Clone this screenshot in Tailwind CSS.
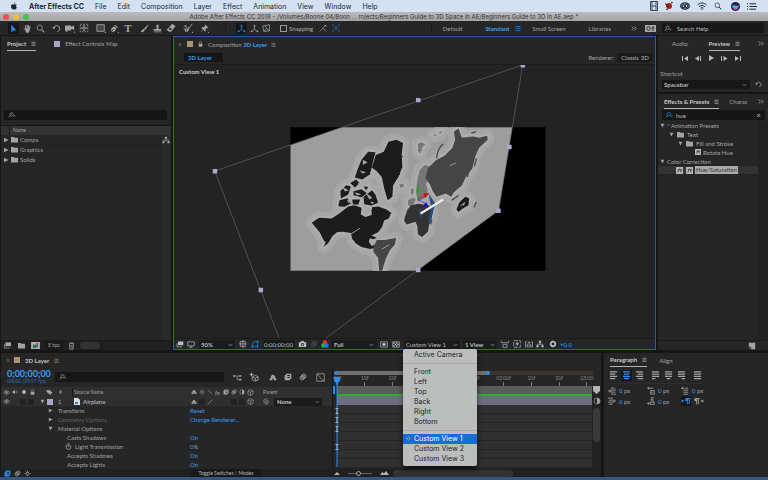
<!DOCTYPE html>
<html lang="en">
<head>
  <meta charset="UTF-8">
  <meta name="viewport" content="width=device-width, initial-scale=1.0">
  <title>Adobe After Effects CC 2018</title>
  <script src="https://cdn.jsdelivr.net/npm/@tailwindcss/browser@4"></script>
</head>
<body class="h-screen flex flex-col overflow-hidden bg-[#161616] text-[#a3a3a3] font-[Lato,sans-serif] text-[6px] leading-[9px]">

  <!-- Icon set -->
  <svg class="hidden">
    <symbol id="apple" viewBox="0 0 12 12"><path fill="currentColor" d="M8 .5C7 .6 6 1.600 6.100 2.800 7.200 2.800 8.100 1.700 8 .5zM10.300 8.400c-.6 1.500-1.400 2.800-2.400 2.800-.7 0-1-.4-1.800-.4s-1.200.4-1.800.4C2.900 11.200 1.500 8.700 1.500 6.500c0-2 1.300-3.200 2.600-3.200.8 0 1.500.5 2 .5s1.300-.6 2.300-.5c.7 0 1.400.4 1.800 1-1.600 1-1.300 3.300.1 4.100z"/></symbol>
    <symbol id="menu" viewBox="0 0 6 6"><path stroke="currentColor" d="M.5 1.500h5M.5 3.500h5M.5 5.500h5" stroke-width=".7"/></symbol>
    <symbol id="more" viewBox="0 0 8 6"><path stroke="currentColor" fill="none" stroke-width="1.200" d="M1 .5 3.500 3 1 5.500M4.500.5 7 3 4.500 5.500"/></symbol>
    <symbol id="down" viewBox="0 0 6 4"><path stroke="currentColor" fill="none" d="M1 1l2 2 2-2" stroke-width=".8"/></symbol>
    <symbol id="tri-r" viewBox="0 0 6 6"><path fill="currentColor" d="M1 .8 5.500 3 1 5.200z"/></symbol>
    <symbol id="tri-d" viewBox="0 0 6 6"><path fill="currentColor" d="M.8 1h4.400L3 5.500z"/></symbol>
    <symbol id="folder" viewBox="0 0 10 8"><path fill="currentColor" d="M1 1h3l1 1h4v5.500H1z"/></symbol>
    <symbol id="find" viewBox="0 0 12 8"><g fill="none" stroke="currentColor" stroke-width="1"><circle cx="5" cy="3" r="2.300"/><path d="M3.300 4.700 1 7.200"/></g><path fill="currentColor" d="M7.500 4.800h3L9 6.500z"/></symbol>
    <symbol id="arrow" viewBox="0 0 12 12"><path fill="currentColor" d="M3 .5v11l2.700-2.800h4.300z"/></symbol>
    <symbol id="hand" viewBox="0 0 12 12"><path fill="none" stroke="currentColor" stroke-width="1.300" stroke-linecap="round" d="M4 6.500 3.300 2.500M5.500 6V1.500M7.200 6l.3-4.200M8.600 6.500l.8-3.200M3.500 8.500 1.500 6"/><path fill="currentColor" d="M3.200 6h6L8.500 9.500 7.500 11.500H4.800L3 8.800z"/></symbol>
    <symbol id="zoom" viewBox="0 0 12 12"><g fill="none" stroke="currentColor"><circle cx="5" cy="5" r="3.500" stroke-width="1"/><path d="m7.500 7.500 3.500 3.700" stroke-width="1.400"/></g></symbol>
    <symbol id="rotate" viewBox="0 0 12 12"><path fill="none" stroke="currentColor" stroke-width="1.200" d="M2.500 5A4 4 0 1 1 7 10"/><path fill="currentColor" d="M.5 4h4.200L2.300 7.200z"/></symbol>
    <symbol id="cam" viewBox="0 0 12 12"><path fill="currentColor" d="M0 3h7.500v1.800L11 3v5.500L7.500 7v2H3v1.500H1V9H0zM10 10.500h2v1.500z"/></symbol>
    <symbol id="panb" viewBox="0 0 12 12"><g fill="none" stroke="currentColor"><path stroke-width="1" stroke-dasharray="2 1.300" d="M1.500 1.500h9v9h-9z"/><path d="M6 3v6M3 6h6"/></g><path fill="currentColor" d="m6 2 1.300 2H4.700zM6 10 4.700 8h2.600zM2 6l2-1.300v2.600zM10 6 8 4.700v2.600z"/></symbol>
    <symbol id="rect" viewBox="0 0 12 12"><path fill="#4a4a4a" stroke="currentColor" d="M1 2h9v8H1z"/><path fill="currentColor" d="M12 10v2h-2z"/></symbol>
    <symbol id="pen" viewBox="0 0 12 12"><path fill="currentColor" d="M7 1l3.500 3.500-1 1L6 2zM5.500 3 8.500 6 6.500 9.500 1.500 11l3.200-3.500.8.300.2-1-1-.3L1 10l1-4.500zM12 10v2h-2z"/></symbol>
    <symbol id="brush" viewBox="0 0 12 12"><path fill="currentColor" d="M11 .5 11.500 1 7 8 5 6.300zM4.500 6.800 6.300 8.500C5.500 10.500 3 11 .8 10.800 2.500 10 2.500 7.300 4.500 6.800z"/></symbol>
    <symbol id="stamp" viewBox="0 0 12 12"><path fill="currentColor" d="M4.500 1h3v2L7 6.500h4V9H1V6.500h4L4.500 3zM1 10h10v1H1z"/></symbol>
    <symbol id="eraser" viewBox="0 0 12 12"><path fill="currentColor" d="M7.500 1 11.500 4 6 10.500H3.500L.8 8.200zM4.500 5.300 3 7l2.500 2L7 7.300z" fill-rule="evenodd"/></symbol>
    <symbol id="roto" viewBox="0 0 12 12"><path fill="none" stroke="currentColor" stroke-width="1.100" d="M1 3.500h3l-1 7M11 1 6 8M1 6.500 4 10l3-5"/><path fill="currentColor" d="M5 6.500 7.500 8 4.500 11zM12 10v2h-2z"/></symbol>
    <symbol id="pin" viewBox="0 0 12 12"><path fill="currentColor" d="M7 .8 11.200 5l-1 .5-1-.3L7.500 7l.3 2-1 1L4.700 7.800 1 11l3-3.900L1.900 5l1-1 2 .3L6.700 2.700l-.3-1zM12 10v2h-2z"/></symbol>
    <symbol id="axis" viewBox="0 0 12 12"><path fill="none" stroke="currentColor" d="M6 7V2M6 7l4 3M6 7l-4 3"/><path fill="currentColor" d="M6 .5 7.700 3H4.300zM.8 11l.5-3 2.500 2.700zM11.200 11l-.5-3-2.500 2.700z"/></symbol>
    <symbol id="axis2" viewBox="0 0 12 12"><path fill="none" stroke="currentColor" d="M1 2.500 10 1v8L2.500 10zM4 2l2 4 4 3M6 6l-3.500 4"/></symbol>
    <symbol id="snap" viewBox="0 0 12 12"><path fill="none" stroke="currentColor" d="M1 11 6 6l4 5M6 6l4-4M8 2h2.500v2.500"/></symbol>
    <symbol id="snap2" viewBox="0 0 12 12"><path fill="none" stroke="currentColor" stroke-dasharray="2 1" d="m2 2 8 8M10 2 2 10"/><path fill="none" stroke="currentColor" d="M1 3V1h2M9 1h2v2M11 9v2H9M3 11H1V9M4.500 4.500h3v3h-3z"/></symbol>
    <symbol id="lock" viewBox="0 0 8 10"><path fill="currentColor" d="M1 4.500h6V9.500H1z"/><path fill="none" stroke="currentColor" d="M2.200 4.500V2.800a1.800 1.800 0 0 1 3.600 0V4.500"/></symbol>
    <symbol id="tree" viewBox="0 0 12 12"><path fill="currentColor" d="M4.300 1h3.400v3.200H4.300zM.5 7.800h3.400V11H.5zM8.100 7.800h3.400V11H8.100z"/><path fill="none" stroke="currentColor" d="M6 4v2M2.200 8V6.200h7.600V8M6 6v2"/></symbol>
    <symbol id="cube" viewBox="0 0 12 12"><path fill="none" stroke="currentColor" d="m6 1 4.500 2.300v5.400L6 11 1.500 8.700V3.300zM1.500 3.300 6 5.500l4.500-2.200M6 5.500V11"/></symbol>
    <symbol id="draft" viewBox="0 0 12 12"><path fill="none" stroke="currentColor" d="m7.500 4 3.500 1.800v3.500L7.500 11 4 9.300V5.800zM4 5.800l3.500 1.700L11 5.800M7.500 7.500V11"/><path fill="currentColor" d="m3 0 .8 2.200L6 3l-2.200.8L3 6l-.8-2.200L0 3l2.200-.8z"/></symbol>
    <symbol id="eye" viewBox="0 0 12 8"><path fill="none" stroke="currentColor" stroke-width="1.200" d="M1 4c2-4 8-4 10 0-2 4-8 4-10 0z"/><circle cx="6" cy="3.800" r="2" fill="currentColor"/></symbol>
    <symbol id="spk" viewBox="0 0 12 10"><path fill="currentColor" d="M1 3h2l3-2.500v9L3 7H1z"/><path fill="none" stroke="currentColor" d="M7.500 3c1 1 1 3 0 4M9 1.500c2 2 2 5 0 7"/></symbol>
    <symbol id="tag" viewBox="0 0 12 10"><path fill="currentColor" d="M1 1.500h5L11 6 7.500 9.500 1 5z"/></symbol>
    <symbol id="shy" viewBox="0 0 12 10"><path fill="currentColor" d="M1 9V6h1.500C2.500 3 4 1 6 1s3.500 2 3.500 5H11v3H7V6.500H5V9z"/></symbol>
    <symbol id="film" viewBox="0 0 12 12"><path fill="currentColor" fill-rule="evenodd" d="M3 1h8v8H9v2H1V3h2zM5 3v1.500h4V3zM5 6v1.500h4V6z"/></symbol>
    <symbol id="blur" viewBox="0 0 12 12"><g fill="none" stroke="currentColor" stroke-width="1.100"><circle cx="7.500" cy="4.500" r="3"/><circle cx="6" cy="6" r="3"/><circle cx="4.500" cy="7.500" r="3"/></g></symbol>
    <symbol id="half" viewBox="0 0 12 12"><circle cx="6" cy="6" r="4.500" fill="none" stroke="currentColor"/><path fill="currentColor" d="M6 1.500a4.500 4.500 0 0 1 0 9z"/></symbol>
    <symbol id="star" viewBox="0 0 12 12"><path stroke="currentColor" fill="none" stroke-width="1.200" d="M6 1v10M1 6h10M3 3l6 6M9 3 3 9"/><circle cx="6" cy="6" r="1.500" fill="#262626"/></symbol>
    <symbol id="slash" viewBox="0 0 12 12"><path stroke="currentColor" stroke-width="1.300" d="M1.500 10.500l9-9"/></symbol>
    <symbol id="bslash" viewBox="0 0 12 12"><path stroke="currentColor" stroke-width="1.300" d="M1.500 1.500l9 9"/></symbol>
    <symbol id="whip" viewBox="0 0 12 12"><path fill="none" stroke="currentColor" stroke-width="1.100" d="M6 6c1-1 2.500.5 1.300 1.800S3.500 8 3.500 6 6 3 7.800 3.800 10.500 7 8.500 9.500 2 10 1.300 6.500 3.500 1 6.500 1"/></symbol>
    <symbol id="graph" viewBox="0 0 12 12"><path fill="none" stroke="currentColor" d="M1 1h10v10H1zM1 2c5 0 4 8 10 8"/></symbol>
    <symbol id="flow" viewBox="0 0 14 10"><path fill="currentColor" d="M0 1.500h3.500v2.500H0zM9.500 1.500H13V4H9.500zM9.500 7H13v2.500H9.500z"/><path fill="none" stroke="currentColor" d="M3 2.700h7M6.500 3v5.300H10"/></symbol>
    <symbol id="trash" viewBox="0 0 10 12"><path fill="none" stroke="currentColor" d="M1 2.500h8M3.500 2.500V1h3v1.500M2 3l.5 8h5L8 3M4 4.500v5M6 4.500v5"/></symbol>
    <symbol id="stack" viewBox="0 0 12 10"><path fill="currentColor" d="M3 .5h8V6H3z"/><path fill="none" stroke="currentColor" d="M1.500 3v5.500H9M5 2.500h4"/></symbol>
    <symbol id="monitor" viewBox="0 0 12 10"><path fill="none" stroke="currentColor" d="M1 1h10v6H1zM6 7v2M3.500 9.200h5"/></symbol>
    <symbol id="grid" viewBox="0 0 12 12"><path fill="none" stroke="currentColor" d="M2 2h7.500v7.500H2zM5.800 0v12M0 5.800h11.500"/></symbol>
    <symbol id="mask" viewBox="0 0 12 12"><path fill="none" stroke="currentColor" stroke-width="1.100" d="M2 10V7c0-2.500 2-4.500 4-4.500h4V10z"/><path fill="currentColor" d="M1 9h2v2H1zM9 1.500h2v2H9zM9 9h2v2H9z"/></symbol>
    <symbol id="photo" viewBox="0 0 12 10"><path fill="currentColor" fill-rule="evenodd" d="M1 2.500h2.500L4.500 1h3l1 1.500H11V9H1zM6 3.500a2.200 2.200 0 1 0 0 4.400 2.200 2.200 0 0 0 0-4.400z"/><circle cx="6" cy="5.700" r="1.200" fill="currentColor"/></symbol>
    <symbol id="roi" viewBox="0 0 12 10"><path fill="none" stroke="currentColor" d="M1 1h10v8H1z"/><path fill="currentColor" d="M3.500 3h5v4h-5z"/></symbol>
    <symbol id="alpha" viewBox="0 0 12 10"><path fill="none" stroke="currentColor" d="M1 1h10v8H1z"/><path fill="currentColor" d="M2 2h2v2H2zM6 2h2v2H6zM4 4h2v2H4zM8 4h2v2H8zM2 6h2v2H2zM6 6h2v2H6z"/></symbol>
    <symbol id="aspect" viewBox="0 0 12 12"><path fill="none" stroke="currentColor" d="M.5 1v3h11V1M3 6.500h6V11H3z"/></symbol>
    <symbol id="fast" viewBox="0 0 12 12"><path fill="none" stroke="currentColor" stroke-dasharray="6 2" d="M1 1h10v10H1z"/><path fill="currentColor" d="M7 2 3.500 6.500H6L5 10l4-5H6.500z"/></symbol>
    <symbol id="tlink" viewBox="0 0 12 10"><path fill="none" stroke="currentColor" d="M3 1H.8v7.500h10.400V1H9M6 7V1M4 3l2-2 2 2M3.500 4v4M8.500 4v4"/></symbol>
    <symbol id="expo" viewBox="0 0 12 12"><circle cx="6" cy="6" r="3.500" fill="none" stroke="currentColor" stroke-width="2.600"/></symbol>
    <symbol id="swatch" viewBox="0 0 10 10"><path fill="currentColor" d="M1 1h8v8H4L1 6z"/><path fill="#262626" d="M1.500 6H4v2.500z"/></symbol>
    <symbol id="preset" viewBox="0 0 8 8"><path fill="#b5b5b5" d="M0 0h8v8H0z"/><path fill="none" stroke="#333" d="M2 6 4 2l2 4M2 3h1M5 3h2"/></symbol>
    <symbol id="left" viewBox="0 0 10 10"><path stroke="currentColor" stroke-width="1.200" d="M1 1h8M1 3.500h6M1 6h8M1 8.500h6"/></symbol>
    <symbol id="center" viewBox="0 0 10 10"><path stroke="currentColor" stroke-width="1.200" d="M1 1h8M2 3.500h6M1 6h8M2 8.500h6"/></symbol>
    <symbol id="right" viewBox="0 0 10 10"><path stroke="currentColor" stroke-width="1.200" d="M1 1h8M3 3.500h6M1 6h8M3 8.500h6"/></symbol>
    <symbol id="jl" viewBox="0 0 10 10"><path stroke="currentColor" stroke-width="1.200" d="M1 1h8M1 3.500h8M1 6h8M1 8.500h4"/></symbol>
    <symbol id="jc" viewBox="0 0 10 10"><path stroke="currentColor" stroke-width="1.200" d="M1 1h8M1 3.500h8M1 6h8M3 8.500h4"/></symbol>
    <symbol id="jr" viewBox="0 0 10 10"><path stroke="currentColor" stroke-width="1.200" d="M1 1h8M1 3.500h8M1 6h8M5 8.500h4"/></symbol>
    <symbol id="ja" viewBox="0 0 10 10"><path stroke="currentColor" stroke-width="1.200" d="M1 1h8M1 3.500h8M1 6h8M1 8.500h8"/></symbol>
    <symbol id="ind-l" viewBox="0 0 10 10"><path stroke="currentColor" fill="none" d="M0 5h4M2.500 3v4M5 0v10M6 1.500h3M6 4h4M6 6.500h3M6 9h4"/></symbol>
    <symbol id="ind-r" viewBox="0 0 10 10"><path stroke="currentColor" fill="none" d="M10 5H6M7.500 3v4M5 0v10M0 1.500h4M1 4h3M0 6.500h4M1 9h3"/></symbol>
    <symbol id="sp-b" viewBox="0 0 10 10"><path stroke="currentColor" fill="none" d="M0 1.500h8M2 0v3M4.500 4.500H9M4.500 4v5H9V4M5 6.500h3"/></symbol>
    <symbol id="sp-a" viewBox="0 0 10 10"><path stroke="currentColor" fill="none" d="M4.500 1H9M4.500 3H8M4.500 5H9M0 8h4M2 6.500v3M4.500 6.500H9v3H4.500z"/></symbol>
    <symbol id="sp-f" viewBox="0 0 10 10"><path stroke="currentColor" fill="none" d="M0 1.500h4M2 0v3M5 1.500h4M3 4h6M3 6.500h6M3 9h6"/></symbol>
  </svg>

  <!-- System menu bar -->
  <header class="h-3 shrink-0 flex items-center bg-[#d3e1f3] text-[#1d2733] font-[Inter,sans-serif] text-[7px] pl-[10px] pr-[11px]">
    <svg class="size-2 mr-[11px]"><use href="#apple"/></svg>
    <nav class="flex gap-[11px]">
      <a href="#" class="font-bold">After Effects CC</a>
      <a href="#">File</a>
      <a href="#">Edit</a>
      <a href="#">Composition</a>
      <a href="#">Layer</a>
      <a href="#">Effect</a>
      <a href="#">Animation</a>
      <a href="#">View</a>
      <a href="#">Window</a>
      <a href="#">Help</a>
    </nav>
    <div class="ml-auto flex items-center gap-[7px]">
      <svg class="w-2 h-[10px]" viewBox="0 0 8 10"><path fill="none" stroke="currentColor" d="M.5.5h7v9h-7zM2 0v10M6 0v10M2 5h4" stroke-width=".8"/></svg>
      <svg class="size-2" viewBox="0 0 8 8"><circle cx="4" cy="4" r="3" fill="#b01c18"/><path stroke="#222" d="M0 1.500 4 4.500M6 1l2-1M3 7 1 8"/></svg>
      <svg class="w-[10px] h-2" viewBox="0 0 10 8"><g fill="none" stroke="currentColor" stroke-width="1.200"><ellipse cx="5" cy="4" rx="4.300" ry="3.200"/><circle cx="3.500" cy="4.300" r="1.500"/><circle cx="6.500" cy="4" r="1.500"/></g></svg>
      <svg class="w-[10px] h-2" viewBox="0 0 10 8"><path fill="none" stroke="currentColor" d="M.5 3C3 .3 7 .3 9.500 3M2 4.700c1.700-1.700 4.300-1.700 6 0M3.500 6.200c1-.8 2-.8 3 0"/><circle cx="5" cy="7.200" r=".7" fill="currentColor"/></svg>
      <svg class="size-2"><use href="#zoom"/></svg>
      <svg class="size-[9px] ml-[2px]" viewBox="0 0 9 9"><circle cx="4.500" cy="4.500" r="4.500" fill="#232046"/><path d="M1 4.500c2-3 5 1 7-1.500-.5 4-5 5-7 1.500z" fill="#35b8e8"/><path d="M2 6c2 1 4-1 5.500-1C7 8 3 9 2 6z" fill="#d355c0"/></svg>
      <svg class="w-[10px] h-[7px]" viewBox="0 0 10 7"><path stroke="currentColor" d="M0 .8h1M2.500.8H9M0 3.500h1M2.500 3.500H10M0 6.200h1M2.500 6.200H9"/></svg>
    </div>
  </header>

  <!-- Title bar -->
  <div class="h-[9px] shrink-0 flex items-center bg-linear-to-b from-[#bcbabc] to-[#a5a3a5] text-[#333] px-[3px]">
    <div class="flex gap-1">
      <span class="size-[6px] rounded-full bg-[#f4504b]"></span>
      <span class="size-[6px] rounded-full bg-[#f6bd3d]"></span>
      <span class="size-[6px] rounded-full bg-[#3bc84c]"></span>
    </div>
    <h1 class="grow text-center pr-[26px] font-[Inter,sans-serif] text-[6px] leading-[9px] whitespace-nowrap">Adobe After Effects CC 2018 - /Volumes/Boone 04/Boon ... rojects/Beginners Guide to 3D Space in AE/Beginners Guide to 3D in AE.aep *</h1>
  </div>

  <!-- Tools -->
  <div class="h-[14px] shrink-0 flex items-center bg-[#262626] pl-2 pr-1">
    <div class="flex items-center gap-1">
      <button aria-label="Selection" class="bg-[#161616] text-[#2d8ceb] p-px"><svg class="size-[9px]"><use href="#arrow"/></svg></button>
      <button aria-label="Hand"><svg class="size-[9px]"><use href="#hand"/></svg></button>
      <button aria-label="Zoom"><svg class="size-[9px]"><use href="#zoom"/></svg></button>
    </div>
    <div class="flex items-center gap-1 ml-[7px]">
      <button aria-label="Rotate"><svg class="size-[9px]"><use href="#rotate"/></svg></button>
      <button aria-label="Camera"><svg class="size-[10px]"><use href="#cam"/></svg></button>
      <button aria-label="Pan behind"><svg class="size-[10px]"><use href="#panb"/></svg></button>
    </div>
    <div class="flex items-center gap-1 ml-[7px]">
      <button aria-label="Rectangle"><svg class="size-[10px]"><use href="#rect"/></svg></button>
      <button aria-label="Pen"><svg class="size-[9px]"><use href="#pen"/></svg></button>
      <button aria-label="Type" class="w-[10px] font-['Liberation_Serif',serif] text-[11px] leading-[10px] font-bold">T</button>
    </div>
    <div class="flex items-center gap-1 ml-[7px]">
      <button aria-label="Brush"><svg class="size-[9px]"><use href="#brush"/></svg></button>
      <button aria-label="Clone stamp"><svg class="size-[9px]"><use href="#stamp"/></svg></button>
      <button aria-label="Eraser"><svg class="size-[10px]"><use href="#eraser"/></svg></button>
    </div>
    <div class="flex items-center gap-[7px] ml-[7px]">
      <button aria-label="Roto brush"><svg class="size-[10px]"><use href="#roto"/></svg></button>
      <button aria-label="Puppet pin"><svg class="size-[9px]"><use href="#pin"/></svg></button>
    </div>
    <div class="flex items-center gap-[3px] ml-4 pl-[10px] border-l border-[#1b1b1b]">
      <button aria-label="Local axis" class="bg-[#161616] text-[#2d8ceb] p-px"><svg class="size-[9px]"><use href="#axis"/></svg></button>
      <button aria-label="World axis"><svg class="size-[9px]"><use href="#axis"/></svg></button>
      <button aria-label="View axis"><svg class="size-[9px]"><use href="#axis2"/></svg></button>
    </div>
    <label class="flex items-center gap-[2px] ml-[9px] text-[#b0b0b0]">
      <input type="checkbox" class="appearance-none size-[7px] border border-[#9a9a9a]">Snapping
    </label>
    <button aria-label="Snap edges" class="ml-[6px]"><svg class="size-2"><use href="#snap"/></svg></button>
    <button aria-label="Snap features" class="ml-[5px] text-[#2671ad]"><svg class="size-2"><use href="#snap2"/></svg></button>

    <nav class="ml-auto flex items-center border-l border-[#1b1b1b] pl-[11px]">
      <a href="#">Default</a>
      <a href="#" class="ml-[23px] text-[#3ba0f2] font-bold">Standard</a>
      <svg class="size-[6px] ml-[6px] text-[#2d8ceb]"><use href="#menu"/></svg>
      <a href="#" class="ml-[11px]">Small Screen</a>
      <a href="#" class="ml-[23px]">Libraries</a>
      <svg class="w-[6px] h-[5px] ml-5"><use href="#more"/></svg>
    </nav>
    <svg class="w-[11px] h-[7px] ml-2" viewBox="0 0 11 7"><path fill="#a8a8a8" d="M0 0h11v7H0z"/><circle cx="3.500" cy="3.500" r="1.800" fill="none" stroke="#333"/><path stroke="#333" d="M8 1v5M6.500 3h3"/></svg>
    <label class="flex items-center gap-1 bg-[#171717] ml-[6px] h-[10px] w-[102px] pl-[2px]">
      <svg class="w-[10px] h-[7px]"><use href="#find"/></svg>
      <input type="text" aria-label="Search Help" placeholder="Search Help" class="w-full min-w-0 bg-transparent placeholder:text-[#bcbcbc]">
    </label>
  </div>

  <!-- Top row of panels -->
  <main class="flex-1 min-h-0 flex gap-[2px] pt-px pb-[3px]">

    <!-- Project -->
    <section class="w-[171px] shrink-0 flex flex-col bg-[#262626] border-l border-[#161616]">
      <div class="flex items-center h-[15px] pl-[6px]">
        <div class="flex items-center gap-[5px] h-[14px] border-b border-[#b5b5b5] text-[#c8c8c8] font-bold">Project <svg class="size-[5px]"><use href="#menu"/></svg></div>
        <span class="size-[6px] bg-[#a9a6cf] ml-[18px] mr-[5px]"></span>Effect Controls Map
      </div>
      <div class="h-[59px]"></div>
      <label class="flex items-center h-[10px] bg-[#161616] ml-[3px] mr-1 pl-1">
        <svg class="w-[9px] h-[6px]"><use href="#find"/></svg>
        <input type="text" aria-label="Search project" class="w-full min-w-0 bg-transparent">
      </label>
      <div class="h-[10px] mt-[5px] border-t border-[#161616] bg-[#333] text-[5px] flex items-center pl-2"><span class="border-l border-[#1b1b1b] pl-[3px]">Name</span></div>
      <div class="flex flex-1">
        <ul class="flex-1 *:h-[10px] *:flex *:items-center *:gap-px *:pl-[2px] *:border-b *:border-[#222]">
          <li><svg class="size-[6px]"><use href="#tri-r"/></svg><svg class="w-[9px] h-[7px]"><use href="#folder"/></svg>Comps</li>
          <li><svg class="size-[6px]"><use href="#tri-r"/></svg><svg class="w-[9px] h-[7px]"><use href="#folder"/></svg>Graphics</li>
          <li><svg class="size-[6px]"><use href="#tri-r"/></svg><svg class="w-[9px] h-[7px]"><use href="#folder"/></svg>Solids</li>
        </ul>
        <div class="w-[9px] bg-[#2a2a2a] pt-px"><svg class="size-2"><use href="#tree"/></svg></div>
      </div>
      <div class="h-[10px] flex items-center gap-[5px] pl-[2px] border-t border-[#1b1b1b] bg-[#202020]">
        <svg class="w-[9px] h-[7px]"><use href="#stack"/></svg>
        <svg class="w-[9px] h-[7px]"><use href="#folder"/></svg>
        <svg class="w-[9px] h-[7px]" viewBox="0 0 10 8"><path fill="#b5b5b5" d="M0 0h10v8H0z"/><path fill="#2a7a48" d="M2 3h4v4H2z"/><path fill="#d1362c" d="M6 1h2v3H6z"/><path fill="#2b63c4" d="M5 4h3v2H5z"/></svg>
        <button class="bg-[#1a1a1a] px-[3px] text-[5px]">8 bpc</button>
        <svg class="w-[7px] h-2"><use href="#trash"/></svg>
        <span class="w-5 h-[7px] rounded-full bg-[#323232]"></span>
      </div>
    </section>

    <!-- Composition -->
    <section class="flex-1 min-w-0 flex flex-col bg-[#262626] border border-[#29609b] relative">
      <div class="flex items-center h-[14px] pl-1">
        <span class="text-[7px] text-[#777]">×</span>
        <span class="size-[6px] bg-[#a8946f] ml-[5px]"></span>
        <svg class="w-[5px] h-[6px] mx-[5px]"><use href="#lock"/></svg>
        Composition&nbsp;<b class="text-[#3a9df0]">3D Layer</b>
        <svg class="size-[5px] ml-1"><use href="#menu"/></svg>
      </div>
      <div class="flex items-center h-[14px] pl-[10px] border-b border-[#1d1d1d]">
        <button class="bg-[#161616] text-[#3a9df0] font-bold w-[39px] text-left pl-1">3D Layer</button>
        <span class="ml-auto mr-[3px]">Renderer:</span>
        <button class="bg-[#1b1b1b] w-9 mr-[2px] text-[#b5b5b5]">Classic 3D</button>
      </div>

      <div class="flex-1 min-h-0 bg-[#232323] relative">
        <svg class="w-full h-full" viewBox="174 65 481 274">
          <defs>
            <clipPath id="comp"><path d="M290 127.500h256v144H290z"/></clipPath>
            <filter id="coast" x="-5%" y="-5%" width="110%" height="110%"><feTurbulence type="fractalNoise" baseFrequency=".3" numOctaves="2" seed="4" result="n"/><feDisplacementMap in="SourceGraphic" in2="n" scale="5" xChannelSelector="R" yChannelSelector="G"/></filter>
            <path id="america" d="M124 340l22-15 38 2 22-14 28-22 18-4 22 8-2 20 14 8 18-6 2-24 18-2 24 8 16 12-8 16-14 6-6 20-12 16-22 10-6 18 8 12 20-4 2 8-26 6-26-6-16-10-12-14-4-18-24-4-18 2-14 12-12 20-14 12 6-14-6-6-12-24z"/>
            <path id="arctic" d="M305 174l12-38 24-10 14-30 24-6 20 10-4 32 2 40-12 30-16 26-2 34-14 10-10-32-8-38-16-18zM262 180l12-30 20-24 22 2-8 30-8 36-24 16-22-6zM210 245l18-18 14 4-8 24-22 12zM240 220l18-10 10 10-14 14zM250 245l24-6 16 12-16 12-24-6zM208 272l24-6 10 16-20 10-18-2zM280 230l14 2-6 10zM280 262l26-20 10 14 8 24-20 8-22-4zM246 270l24 0-6 16-16-2zM290 382l14-4 16 8-12 4z"/>
            <path id="samerica" d="M310 412l10-20 24 0 34-6-4 20-14 16-12 24-8 24-6 24h-6l-4-48-14-18z"/>
            <path id="africa" d="M404 325l8-24 12-14 22-4 32 6 10 20-4 22-6 12-4 24-18 16-12-8-2-26-6-12-26 8-8-12z"/>
            <path id="aus" d="M560 300l8-20 18-18 12 4-2 22-16 8-14 12z"/>
            <path id="asia" d="M466 206l8-30 24-24 26-14 24-24 8-24-4-24 14-10 10 28 34-4 18 4 24-6 2 12-26 24-12 28-8 34-20 26-12 26-24 20-8 14-16-10-28 10-12-18-8-20z"/>
            <path id="europe" d="M438 250l4-40 8-30 14-14 16 4-4 34-8 20 6 20-10 22-20 10zM424 236l8 4-4 16-6-4zM414 272l14-8 10 6-14 24-10-8zM388 224l12-2 2 8-10 6zM444 102l10-4 10 4-8 14-6 16-6-8zM490 76l10-4-4 8zM506 68l12-6-6 10z"/>
            <g id="lands"><use href="#america"/><use href="#arctic"/><use href="#samerica"/><use href="#africa"/><use href="#aus"/><use href="#asia"/><use href="#europe"/></g>
          </defs>
          <path fill="#000" d="M290 127.500h256v144H290z"/>
          <g clip-path="url(#comp)">
            <path fill="#9d9d9d" d="M214 171.500 523 65 499 211 289 366z"/>
            <g transform="translate(270 110) scale(.3333)">
              <g stroke="#a6a6a6" fill="#a6a6a6" stroke-width="38" stroke-linejoin="round"><use href="#lands"/></g>
              <g stroke="#adadad" fill="#adadad" stroke-width="14" stroke-linejoin="round"><use href="#lands"/></g>
              <g filter="url(#coast)">
                <g fill="#1e1e1e"><use href="#america"/><use href="#arctic"/><use href="#aus"/></g>
                <path fill="#a6a6a6" d="m216 232 20 10-12 4zM254 248l20 6-14 4zM286 250l20 14-8 6zM300 276l12 2-6 6zM230 270l18 8-14 2zM278 150l14 8-14 8zM268 182l20 6-12 4zM575 286l10-6-2 8z"/>
                <use href="#europe" fill="#777"/>
                <use href="#samerica" fill="#454545"/>
                <use href="#asia" fill="#444"/>
                <use href="#africa" fill="#313131"/>
                <path fill="none" stroke="#4a4a4a" stroke-width="4" d="M500 146c2-20 8-34 20-44M620 146l-6 24M598 184l-6 18M546 272l20-14M612 294l8-16M482 345l4-14M604 70l14-4"/>
              </g>
              <path stroke="#999" stroke-width="3" d="m242 374 28-18M334 420l24-14M572 290l14-12M540 168l18-8"/>
              <path fill="#224c86" d="m476 252 20 30-16 62-6-4 10-46zM446 300l10 4-4 26z"/>
              <path stroke="#ececec" stroke-width="7" d="M452 312 520 270"/>
              <path stroke="#18a020" stroke-width="2" d="M444 268v-34"/><path fill="#18a81e" d="m444 226 5 18h-10z"/>
              <path stroke="#b01818" stroke-width="2" d="m444 268 26-12"/><path fill="#c01414" d="m478 250-18 2 6 14z"/>
              <path stroke="#1a1ad0" stroke-width="2" d="m444 270 26 14"/><path fill="#1515d0" d="m478 292-18-4 8-10z"/>
            </g>
          </g>
          <path fill="none" stroke="#6d6b80" stroke-width=".6" d="M214 171.500 523 65 499 211 289 366z"/>
          <path fill="#aaa8d0" d="M212 169.500h4.500v4.500H212zM416 98h4.500v4.500H416zM521 63h4.500v4.500H521zM507.500 145h4.500v4.500h-4.500zM496.500 209h4.500v4.500h-4.500zM416 268.500h4.500v4.500H416zM258 288.500h4.500v4.500H258z"/>
        </svg>
        <b class="absolute top-[2px] left-[5px] text-[#ccc]">Custom View 1</b>
      </div>

      <div class="h-[11px] flex items-center border-t border-[#1b1b1b] pl-[2px] text-[#bdbdbd]">
        <svg class="w-2 h-[7px]"><use href="#stack"/></svg>
        <svg class="w-2 h-[7px] ml-[3px]"><use href="#monitor"/></svg>
        <div class="relative w-9 ml-1 bg-[#1b1b1b]">
          <select aria-label="Magnification" class="appearance-none w-full font-bold pl-[2px]"><option>50%</option></select>
          <svg class="absolute right-[2px] top-[3px] w-[5px] h-1"><use href="#down"/></svg>
        </div>
        <svg class="size-2 ml-1"><use href="#grid"/></svg>
        <svg class="size-2 ml-1 text-[#2d8ceb]"><use href="#mask"/></svg>
        <button class="bg-[#1b1b1b] w-[31px] ml-1">0;00;00;00</button>
        <svg class="w-[9px] h-2 ml-1"><use href="#photo"/></svg>
        <svg class="size-2 ml-[3px] text-[#484848]"><use href="#blur"/></svg>
        <svg class="size-2 ml-[3px]" viewBox="0 0 8 8"><circle cx="4" cy="2.500" r="2.200" fill="#e33"/><circle cx="2.500" cy="5.500" r="2.200" fill="#2b2"/><circle cx="5.500" cy="5.500" r="2.200" fill="#36f"/></svg>
        <div class="relative w-[46px] ml-[2px] bg-[#1b1b1b]">
          <select aria-label="Resolution" class="appearance-none w-full font-bold pl-[3px]"><option>Full</option></select>
          <svg class="absolute right-[3px] top-[3px] w-[5px] h-1"><use href="#down"/></svg>
        </div>
        <svg class="w-2 h-[7px] ml-[3px]"><use href="#roi"/></svg>
        <svg class="w-2 h-[7px] ml-1"><use href="#alpha"/></svg>
        <div class="relative w-14 ml-1">
          <div class="relative bg-[#1b1b1b]">
            <select aria-label="3D view" class="appearance-none w-full pl-[2px]"><option>Custom View 1</option></select>
            <svg class="absolute right-[2px] top-[3px] w-[5px] h-1"><use href="#down"/></svg>
          </div>
          <!-- 3D view popup -->
          <div role="menu" class="absolute z-10 top-[9px] -left-px w-[74px] py-px pb-[2px] rounded-[2px] bg-[#bcbdbd] shadow-md shadow-black/60 text-[#222] font-[Inter,sans-serif] text-[7px] *:block *:text-left whitespace-nowrap">
            <button role="menuitem" class="h-[10px] pl-[11px]">Active Camera</button>
            <hr class="my-[3px] border-[#a8a8a8]">
            <button role="menuitem" class="h-[10px] pl-[11px]">Front</button>
            <button role="menuitem" class="h-[10px] pl-[11px]">Left</button>
            <button role="menuitem" class="h-[10px] pl-[11px]">Top</button>
            <button role="menuitem" class="h-[10px] pl-[11px]">Back</button>
            <button role="menuitem" class="h-[10px] pl-[11px]">Right</button>
            <button role="menuitem" class="h-[10px] pl-[11px]">Bottom</button>
            <hr class="my-[3px] border-[#a8a8a8]">
            <button role="menuitem" class="h-[10px] w-full bg-[#146dd9] text-white"><span class="flex items-center pl-[3px] gap-[3px]"><svg class="size-[5px] text-[#a9bfe8]"><use href="#star"/></svg>Custom View 1</span></button>
            <button role="menuitem" class="h-[10px] pl-[11px]">Custom View 2</button>
            <button role="menuitem" class="h-[10px] pl-[11px]">Custom View 3</button>
          </div>
        </div>
        <div class="relative w-[34px] ml-[3px] bg-[#1b1b1b]">
          <select aria-label="View layout" class="appearance-none w-full font-bold pl-[2px]"><option>1 View</option></select>
          <svg class="absolute right-[2px] top-[3px] w-[5px] h-1"><use href="#down"/></svg>
        </div>
        <svg class="size-2 ml-1"><use href="#aspect"/></svg>
        <svg class="size-2 ml-1"><use href="#fast"/></svg>
        <svg class="w-2 h-[7px] ml-1"><use href="#tlink"/></svg>
        <svg class="size-2 ml-[3px]"><use href="#tree"/></svg>
        <svg class="size-2 ml-[5px]"><use href="#expo"/></svg>
        <a href="#" class="ml-[3px] text-[#3a9df0]">+0.0</a>
      </div>
    </section>

    <!-- Right column -->
    <aside class="w-[110px] shrink-0 flex flex-col gap-[2px]">
      <section class="bg-[#262626] h-14">
        <div class="flex items-center h-[15px] pl-[14px] pr-1">
          Audio
          <div class="flex items-center gap-[5px] h-[14px] border-b border-[#b5b5b5] text-[#c8c8c8] font-bold ml-[21px]">Preview <svg class="size-[5px]"><use href="#menu"/></svg></div>
          <svg class="w-[6px] h-[5px] ml-auto"><use href="#more"/></svg>
        </div>
        <div class="flex justify-center gap-[6px] h-[14px] items-center pr-1 text-[#b8b8b8]">
          <svg class="w-[7px] h-[5px]" viewBox="0 0 7 5"><path fill="currentColor" d="M0 0h1v5H0zM6 0v5L2 2.500z"/></svg>
          <svg class="w-[7px] h-[5px]" viewBox="0 0 7 5"><path fill="currentColor" d="M4 0v5L0 2.500zM5 0h1v5H5z"/></svg>
          <svg class="w-[7px] h-[6px]" viewBox="0 0 7 6"><path fill="currentColor" d="M1 0v6l5-3z"/></svg>
          <svg class="w-[7px] h-[5px]" viewBox="0 0 7 5"><path fill="currentColor" d="M0 0h1v5H0zM2.500 0v5l4-2.500z"/></svg>
          <svg class="w-[7px] h-[5px]" viewBox="0 0 7 5"><path fill="currentColor" d="M1 0v5l4-2.500zM6 0h1v5H6z"/></svg>
        </div>
        <label for="shortcut" class="block pl-[2px] h-[9px] mt-1">Shortcut</label>
        <div class="flex items-center gap-[5px] mt-[2px] pl-1">
          <div class="relative bg-[#171717] w-[88px]">
            <select id="shortcut" class="appearance-none w-full pl-[2px] font-bold text-[#b8b8b8]"><option>Spacebar</option></select>
            <svg class="absolute right-[3px] top-[3px] w-[5px] h-1"><use href="#down"/></svg>
          </div>
          <svg class="size-[7px]"><use href="#rotate"/></svg>
        </div>
      </section>

      <section class="bg-[#262626] flex-1 flex flex-col min-h-0">
        <div class="flex items-center h-[15px] pl-[6px] pr-1">
          <div class="flex items-center gap-[5px] h-[14px] border-b border-[#b5b5b5] text-[#c8c8c8] font-bold">Effects &amp; Presets <svg class="size-[5px]"><use href="#menu"/></svg></div>
          <span class="ml-[10px]">Charac</span>
          <svg class="w-[6px] h-[5px] ml-auto"><use href="#more"/></svg>
        </div>
        <label class="flex items-center gap-[2px] h-[10px] bg-[#161616] ml-1 mr-[3px] pl-[3px] pr-1 mt-px text-[#bdbdbd]">
          <svg class="w-[9px] h-[6px] text-[#2d8ceb]"><use href="#find"/></svg>
          <input type="text" aria-label="Search effects" value="hue" class="flex-1 min-w-0 bg-transparent">
          <span class="text-[8px]">×</span>
        </label>
        <div class="flex flex-1 min-h-0 pt-px">
          <ul class="flex-1 *:h-[9px] *:flex *:items-center *:gap-[2px] *:pl-[2px] *:border-b *:border-[#222] whitespace-nowrap">
            <li><svg class="size-[5px]"><use href="#tri-d"/></svg>* Animation Presets</li>
            <li><span class="w-[7px]"></span><svg class="size-[5px]"><use href="#tri-d"/></svg><svg class="w-[9px] h-[7px]"><use href="#folder"/></svg>Text</li>
            <li><span class="w-4"></span><svg class="size-[5px]"><use href="#tri-d"/></svg><svg class="w-[9px] h-[7px]"><use href="#folder"/></svg>Fill and Stroke</li>
            <li><span class="w-[33px]"></span><svg class="size-[6px]"><use href="#preset"/></svg>Rotate Hue</li>
            <li><svg class="size-[5px]"><use href="#tri-d"/></svg>Color Correction</li>
            <li class="bg-[#333]"><span class="w-[14px]"></span><svg class="size-[7px]"><use href="#preset"/></svg><svg class="size-[7px] ml-px"><use href="#preset"/></svg><span class="bg-[#aaa] text-[#333] px-px leading-2">Hue/Saturation</span></li>
          </ul>
          <div class="w-[10px] bg-[#222]"></div>
        </div>
        <div class="h-[10px] border-t border-[#1b1b1b] flex justify-end items-center pr-3"><svg class="size-2"><use href="#swatch"/></svg></div>
      </section>
    </aside>
  </main>

  <!-- Bottom row of panels -->
  <footer class="shrink-0 flex gap-[3px] border-b-3 border-[#365580]">

    <!-- Timeline -->
    <section class="flex-1 min-w-0 bg-[#262626] border-l border-[#161616]">
      <div class="flex items-center h-[14px] pl-[5px]">
        <span class="text-[7px] text-[#777]">×</span>
        <span class="size-[6px] bg-[#a8946f] ml-1 mr-[5px]"></span>
        <b class="text-[#c4c4c4]">3D Layer</b>
        <svg class="size-[5px] ml-[5px]"><use href="#menu"/></svg>
      </div>
      <div class="flex">
        <!-- Layer outline -->
        <div class="w-[331px] shrink-0">
          <div class="flex items-center h-5">
            <div class="w-[54px] pl-[6px] text-[#3a9df0]">
              <p class="text-[9px] leading-[9px] font-bold">0;00;00;00</p>
              <p class="text-[5px] leading-[7px] text-[#2671ad]">00000 (29.97 fps)</p>
            </div>
            <label class="flex items-center w-[169px] h-[10px] bg-[#161616] pl-1"><svg class="w-[9px] h-[6px]"><use href="#find"/></svg><input type="text" aria-label="Search layers" class="w-full min-w-0 bg-transparent"></label>
            <div class="flex items-center gap-[7px] pl-[9px]">
              <svg class="w-[9px] h-[7px]"><use href="#flow"/></svg>
              <svg class="size-[10px]"><use href="#draft"/></svg>
              <svg class="w-2 h-[7px] ml-[3px]"><use href="#shy"/></svg>
              <svg class="size-2"><use href="#film"/></svg>
              <svg class="size-2"><use href="#blur"/></svg>
              <svg class="size-[9px] ml-[2px]"><use href="#graph"/></svg>
            </div>
          </div>
          <div class="grid grid-cols-[189px_73px_1fr] items-center h-[10px] bg-[#2f2f2f] text-[5px]">
            <div class="flex items-center gap-[2px] pl-[2px]">
              <svg class="w-[7px] h-[5px]"><use href="#eye"/></svg><svg class="w-[6px] h-[6px]"><use href="#spk"/></svg><span class="size-1 rounded-full bg-[#b0b0b0] mx-[2px]"></span><svg class="w-[5px] h-[6px]"><use href="#lock"/></svg>
              <svg class="w-[7px] h-[6px] ml-[9px]"><use href="#tag"/></svg><span class="ml-1 w-[11px]">#</span><span class="border-l border-[#1b1b1b] pl-px">Source Name</span>
            </div>
            <div class="flex items-center gap-[2px] pl-px">
              <svg class="size-[6px]"><use href="#shy"/></svg><svg class="size-[6px]"><use href="#star"/></svg><svg class="size-[6px]"><use href="#bslash"/></svg><i class="w-[6px] text-[6px]">fx</i><svg class="size-[6px]"><use href="#film"/></svg><svg class="size-[6px]"><use href="#blur"/></svg><svg class="size-[6px]"><use href="#half"/></svg><svg class="size-[7px]"><use href="#cube"/></svg>
            </div>
            <span>Parent</span>
          </div>
          <div class="grid grid-cols-[189px_73px_1fr] items-center h-[9px] bg-[#2f2f2f]">
            <div class="flex items-center pl-[2px]">
              <svg class="w-[7px] h-[5px]"><use href="#eye"/></svg><span class="size-[6px] bg-[#222] ml-[10px]"></span><span class="size-[6px] bg-[#222] ml-[2px]"></span>
              <svg class="size-[5px] ml-[6px]"><use href="#tri-d"/></svg><span class="size-[6px] bg-[#a9a6cf] ml-[2px]"></span><span class="ml-[5px] w-4">1</span>
              <svg class="w-[6px] h-[7px] mr-[3px]" viewBox="0 0 6 7"><path fill="#ddd" d="M0 0h4l2 2v5H0z"/><path fill="#4a7fae" d="M1 4h3v2H1z"/></svg><b>Airplane</b>
            </div>
            <div class="flex items-center gap-[2px] pl-px">
              <svg class="size-[6px]"><use href="#shy"/></svg><span class="size-[6px] bg-[#222]"></span><svg class="size-[6px]"><use href="#slash"/></svg><span class="size-[6px]"></span><span class="size-[6px]"></span><span class="size-[6px] bg-[#222]"></span><span class="size-[6px] bg-[#222]"></span><svg class="size-[7px]"><use href="#cube"/></svg>
            </div>
            <div class="flex items-center gap-1">
              <svg class="size-[7px]"><use href="#whip"/></svg>
              <div class="relative w-12 bg-[#1b1b1b]">
                <select aria-label="Parent" class="appearance-none w-full h-2 leading-2 block font-bold pl-[3px] text-[#c4c4c4]"><option>None</option></select>
                <svg class="absolute right-[2px] top-[2px] w-[5px] h-1"><use href="#down"/></svg>
              </div>
            </div>
          </div>
          <ul class="*:grid *:grid-cols-[189px_1fr] *:h-[9px]">
            <li><span class="flex items-center gap-[5px] pl-[47px]"><svg class="size-[5px]"><use href="#tri-r"/></svg>Transform</span><a href="#" class="text-[#3a9df0]">Reset</a></li>
            <li><span class="flex items-center gap-[5px] pl-[47px] text-[#606060]"><svg class="size-[5px] text-[#a3a3a3]"><use href="#tri-r"/></svg>Geometry Options</span><a href="#" class="text-[#3a9df0]">Change Renderer...</a></li>
            <li><span class="flex items-center gap-[5px] pl-[47px]"><svg class="size-[5px]"><use href="#tri-d"/></svg>Material Options</span></li>
            <li><span class="pl-[66px]">Casts Shadows</span><a href="#" class="text-[#3a9df0]">On</a></li>
            <li><span class="flex items-center gap-[3px] pl-16"><svg class="size-[7px]" viewBox="0 0 12 12"><g fill="none" stroke="currentColor" stroke-width="1.300"><circle cx="6" cy="7" r="4"/><path d="M6 7V4M4.500.8h3M1.500 2.500l1.300 1.300"/></g></svg>Light Transmission</span><span><a href="#" class="text-[#3a9df0]">0</a>%</span></li>
            <li><span class="pl-[66px]">Accepts Shadows</span><a href="#" class="text-[#3a9df0]">On</a></li>
            <li><span class="pl-[66px]">Accepts Lights</span><a href="#" class="text-[#3a9df0]">On</a></li>
          </ul>
        </div>

        <!-- Time graph -->
        <div class="flex-1 min-w-0 relative border-l border-[#161616] flex flex-col">
          <div class="h-1 mt-1 mr-2 ml-px flex bg-[#3a352e]">
            <span class="w-[3px] rounded-l bg-[#2d8ceb]"></span><span class="w-[58%] bg-[#707070]"></span><span class="w-[3px] rounded-r bg-[#2d8ceb]"></span>
          </div>
          <div class="h-[11px] flex justify-between pl-1 pr-[14px] text-[5px] leading-[7px] text-[#868686] whitespace-nowrap *:w-0 *:flex *:flex-col *:items-center *:after:w-px *:after:h-1 *:after:bg-[#777]">
            <span>:00f</span><span>10f</span><span>20f</span><span>&nbsp;</span><span>&nbsp;</span><span>20f</span><span>02:00f</span><span>10f</span><span>20f</span><span>03:00</span>
          </div>
          <div class="flex flex-1">
            <div class="flex-1 pl-1">
              <div class="h-2 bg-[#5b5b5b]"></div>
              <div class="h-[2px] bg-[#28b02c]"></div>
              <div class="h-[9px] bg-[#6f6d84]"></div>
              <div class="*:h-[9px] *:bg-[#303030] *:border-b *:border-[#252525]"><div></div><div></div><div></div><div></div><div></div><div></div><div></div></div>
            </div>
            <div class="w-[9px] flex flex-col items-center gap-[3px] bg-[#222]">
              <svg class="w-[7px] h-2 shrink-0" viewBox="0 0 7 8"><path fill="#b5b5b5" d="M0 0h7v5L3.500 8 0 5z"/></svg>
              <svg class="size-2 shrink-0"><use href="#half"/></svg>
              <span class="w-[7px] h-[34px] rounded-full bg-[#393939]"></span>
            </div>
          </div>
          <svg class="absolute left-0 top-[10px] w-2 h-[90px]" viewBox="0 0 8 90"><path fill="#2d8ceb" d="M1 0h6v4L4 7 1 4zM0 9h2v8H0z"/><path stroke="#2d8ceb" d="M4 5v85"/><path fill="none" stroke="#9fb4c8" d="M2.500 31.500h3M2.500 36.500h3M4 31.500v5M2.500 40.500h3M2.500 45.500h3M4 40.500v5M2.500 49.500h3M2.500 54.500h3M4 49.500v5M2.500 67.500h3M2.500 72.500h3M4 67.500v5"/></svg>
        </div>
      </div>
      <div class="flex items-center h-2 bg-[#202020]">
        <div class="w-[331px] shrink-0 flex items-center gap-[3px] pl-[3px]">
          <svg class="size-[7px] text-[#2d8ceb]"><use href="#film"/></svg>
          <svg class="size-[7px]"><use href="#blur"/></svg>
          <svg class="size-[7px]"><use href="#star"/></svg>
          <button class="w-[70px] h-2 leading-2 bg-[#191919] ml-[157px] whitespace-nowrap text-[5px] text-[#b8b8b8]">Toggle Switches / Modes</button>
        </div>
        <svg class="w-[6px] h-[3px] ml-[2px]" viewBox="0 0 6 3"><path fill="#b5b5b5" d="M0 3 3 0l3 3z"/></svg>
        <input type="range" aria-label="Time zoom" value="42" class="appearance-none w-6 h-px bg-[#666] mx-2 [&::-webkit-slider-thumb]:appearance-none [&::-webkit-slider-thumb]:size-[5px] [&::-webkit-slider-thumb]:rounded-full [&::-webkit-slider-thumb]:border [&::-webkit-slider-thumb]:border-[#aaa] [&::-webkit-slider-thumb]:bg-[#222]">
        <svg class="w-[9px] h-1" viewBox="0 0 9 4"><path fill="#b5b5b5" d="M0 4 2.500 1 4 2.500 6 0l3 4z"/></svg>
        <span class="w-[120px] h-[7px] rounded-full bg-[#333] ml-1"></span>
      </div>
    </section>

    <!-- Paragraph -->
    <section class="w-[164px] shrink-0 bg-[#262626]">
      <div class="flex items-center h-[14px] pl-[6px]">
        <div class="flex items-center gap-[5px] h-[14px] border-b border-[#b5b5b5] text-[#c8c8c8] font-bold">Paragraph <svg class="size-[5px]"><use href="#menu"/></svg></div>
        <span class="ml-3">Align</span>
      </div>
      <div class="flex items-center h-[17px] ml-1 w-[94px] border-b border-[#2e2e2e]">
        <button aria-label="Align left" class="p-px"><svg class="size-[9px]"><use href="#left"/></svg></button>
        <button aria-label="Align center" class="p-px ml-[2px] bg-[#161616] text-[#2d8ceb]"><svg class="size-[9px]"><use href="#center"/></svg></button>
        <button aria-label="Align right" class="p-px ml-[2px]"><svg class="size-[9px]"><use href="#right"/></svg></button>
        <button aria-label="Justify last left" class="p-px ml-[5px]"><svg class="size-[9px]"><use href="#jl"/></svg></button>
        <button aria-label="Justify last center" class="p-px ml-[2px]"><svg class="size-[9px]"><use href="#jc"/></svg></button>
        <button aria-label="Justify last right" class="p-px ml-[2px]"><svg class="size-[9px]"><use href="#jr"/></svg></button>
        <button aria-label="Justify all" class="p-px ml-[5px]"><svg class="size-[9px]"><use href="#ja"/></svg></button>
      </div>
      <div class="grid grid-cols-[39px_34px_1fr] gap-y-px pl-[4px] pt-[2px]">
        <span class="flex items-center gap-[3px]"><svg class="size-2"><use href="#ind-l"/></svg><span><a href="#" class="text-[#3a9df0]">0</a> px</span></span>
        <span class="flex items-center gap-[3px]"><svg class="size-2"><use href="#sp-b"/></svg><span><a href="#" class="text-[#3a9df0]">0</a> px</span></span>
        <span class="flex items-center gap-[3px]"><svg class="size-2"><use href="#sp-f"/></svg><span><a href="#" class="text-[#3a9df0]">0</a> px</span></span>
        <span class="flex items-center gap-[3px]"><svg class="size-2"><use href="#ind-r"/></svg><span><a href="#" class="text-[#3a9df0]">0</a> px</span></span>
        <span class="flex items-center gap-[3px]"><svg class="size-2"><use href="#sp-a"/></svg><span><a href="#" class="text-[#3a9df0]">0</a> px</span></span>
        <span class="flex items-center gap-[3px]">
          <button aria-label="Left to right" class="bg-[#161616] text-[#2d8ceb] h-[10px] w-[10px] text-[8px] leading-[10px] font-bold flex items-center"><svg class="size-1"><use href="#tri-r"/></svg>¶</button>
          <button aria-label="Right to left" class="h-[10px] text-[8px] leading-[10px] font-bold flex items-center">¶<svg class="size-1 rotate-180"><use href="#tri-r"/></svg></button>
        </span>
      </div>
    </section>
  </footer>
</body>
</html>
